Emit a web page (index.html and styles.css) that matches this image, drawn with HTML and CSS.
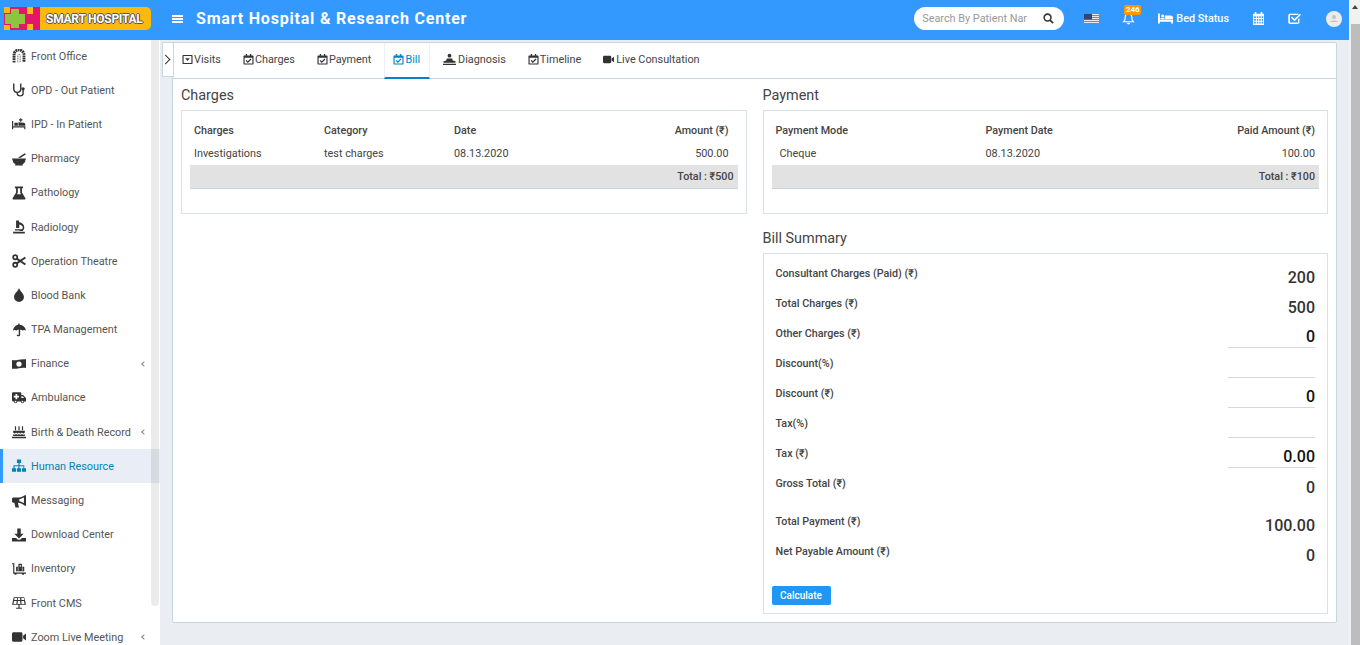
FILE: index.html
```html
<!DOCTYPE html>
<html lang="en">
<head>
    <meta charset="UTF-8">
    <title>Smart Hospital &amp; Research Center</title>
    <link rel="stylesheet" href="styles.css">
</head>
<body>
    <svg class="sprite" xmlns="http://www.w3.org/2000/svg">
        <symbol id="i-office" viewBox="0 0 24 24"><path d="M3.500 23V10a8.500 8.500 0 0 1 17 0v13" fill="none" stroke="currentColor" stroke-width="5" stroke-dasharray="3 1"/><path d="M10 23V11a2 2 0 0 1 4 0v12" fill="none" stroke="currentColor" stroke-width="1.200" stroke-dasharray="2 1"/></symbol>
        <symbol id="i-stetho" viewBox="0 0 24 24"><path d="M4 2H3v8c0 4 3 6 6 6s6-2 6-6V2h-1" fill="none" stroke="currentColor" stroke-width="2.400"/><path d="M9 16v2c0 2 2 4 5 4s5-2 5-4v-6" fill="none" stroke="currentColor" stroke-width="2.400"/><circle cx="19" cy="10" r="2.800"/></symbol>
        <symbol id="i-bed-plus" viewBox="0 0 24 24"><path d="M0 7h2v9h21v5h-2v-3H2v3H0zM4 10h6v5H4zM11 9l9 1c2 0 3 2 3 5H11zM14 2h2v2h2v2h-2v2h-2V6h-2V4h2z"/></symbol>
        <symbol id="i-mortar" viewBox="0 0 24 24"><path d="M0 11h24v2h-1c0 4-2 7-5 8l1 2H5l1-2c-3-1-5-4-5-8H0zM10 10 22 2l2 2-9 6z"/></symbol>
        <symbol id="i-flask" viewBox="0 0 24 24"><path fill-rule="evenodd" d="M5 1h14v3h-2v7l6 10c.6 1 0 2-1 2H2c-1 0-1.600-1-1-2l6-10V4H5zM10 4v7.500L8.500 14h7L14 11.500V4z"/></symbol>
        <symbol id="i-microscope" viewBox="0 0 24 24"><path d="M7 1h5v3h1.500c4 1 7.500 4 7.500 8.500 0 3-1 5-3 6.500h-5v-3h3c1.500 0 2.500-1.500 2.500-3.500 0-2-2-4-6-5v6H7zM2 20h20v3H2zM5 16h8v2H5z"/></symbol>
        <symbol id="i-scissors" viewBox="0 0 24 24"><circle cx="5.500" cy="5.500" r="3.500" fill="none" stroke="currentColor" stroke-width="3"/><circle cx="5.500" cy="18.500" r="3.500" fill="none" stroke="currentColor" stroke-width="3"/><path d="M8 8l15 10M8 16 23 6" stroke="currentColor" stroke-width="3.400"/></symbol>
        <symbol id="i-tint" viewBox="0 0 24 24"><path d="M12 0c1 5 8.500 9 8.500 15.500a8.500 8.500 0 0 1-17 0C3.500 9 11 5 12 0z"/></symbol>
        <symbol id="i-umbrella" viewBox="0 0 24 24"><path d="M11 1h2v2c6 .4 10 4 11 10-2-1.500-4-1.500-6 0-1-1-2-1.500-4-1.500V20c0 3.500-6 3.500-6 0h2.500c0 1 1 1 1 0v-8.500c-2 0-3 .5-4 1.500-2-1.500-4-1.500-6 0 1-6 5-9.600 9-10z"/></symbol>
        <symbol id="i-money" viewBox="0 0 24 24"><path fill-rule="evenodd" d="M0 5c7 2.500 13-2.500 24-1v15c-8-2.500-14 2.500-24 1zM12 7.500a4.500 4.500 0 1 0 0 9 4.500 4.500 0 0 0 0-9z"/></symbol>
        <symbol id="i-ambulance" viewBox="0 0 24 24"><path fill-rule="evenodd" d="M2 2h12c1 0 2 1 2 2v3h3l5 5v6h-3a3 3 0 0 1-6 0H9a3 3 0 0 1-6 0H2c-1 0-2-1-2-2V4c0-1 1-2 2-2zm4 3v3H3v3h3v3h3v-3h3V8H9V5zm10 4v3h5l-3-3zM6 16.500a1.500 1.500 0 1 0 0 3 1.500 1.500 0 0 0 0-3zm12 0a1.500 1.500 0 1 0 0 3 1.500 1.500 0 0 0 0-3z"/></symbol>
        <symbol id="i-cake" viewBox="0 0 24 24"><path d="M5 2h2v7H5zM11 2h2v7h-2zM17 2h2v7h-2zM2 10h20v3c-2 2-3 2-5 0-2 2-3 2-5 0-2 2-3 2-5 0-2 2-3 2-5 0zM2 16c2 1 3 1 5-.5 2 1.500 3 1.500 5 0 2 1.500 3 1.500 5 0 2 1.500 3 1.500 5 .5v3H2zM0 20h24v2.500H0z"/></symbol>
        <symbol id="i-sitemap" viewBox="0 0 24 24"><path d="M8.500 1h7v6h-2.500v3.500h8V16H24v6h-7v-6h2.500v-3.500h-6.500V16h2.500v6h-7v-6H11v-3.500H4.500V16H7v6H0v-6h2.500v-5.500h8.500V7H8.500z"/></symbol>
        <symbol id="i-bullhorn" viewBox="0 0 24 24"><path d="M22 2h2v18h-2c-4-3-8-5-12-5l2 8H6l-2-8H3c-2 0-3-1-3-3V9c0-2 1-3 3-3h7c4 0 8-1 12-4zM20.500 6c-3 1.500-5 2.500-8 3v3.500c3 .5 5 1.500 8 3z" fill-rule="evenodd"/></symbol>
        <symbol id="i-download" viewBox="0 0 24 24"><path d="M9 1h6v9h5l-8 8-8-8h5zM0 17h7l3 3h4l3-3h7v6H0z"/></symbol>
        <symbol id="i-dolly" viewBox="0 0 24 24"><path d="M0 2h4v16h20v2h-3a2 2 0 0 1-4 0H8a2 2 0 0 1-4 0H2V4H0zM8 8h12c1 0 1 .5 1 1v7H7V9c0-.5 0-1 1-1zm3-5h6v5h-2V5h-2v3h-2zM10 9v6h1V9zm7 0v6h1V9z" fill-rule="evenodd"/></symbol>
        <symbol id="i-solar" viewBox="0 0 24 24"><path d="M3 2h18l3 13H0zm1.500 1.500-.7 3.500h4.700l.4-3.500zm5.800 0-.3 3.500h4l-.3-3.500zm5.600 0 .4 3.500h4.700l-.7-3.500zM3.500 8.500l-1 5h5l.5-5zm6.500 0-.4 5h4.800l-.4-5zm6 0 .5 5h5l-1-5zM11 15h2v5h4v2H7v-2h4z" fill-rule="evenodd"/></symbol>
        <symbol id="i-video" viewBox="0 0 24 24"><path d="M3 4h12c2 0 3 1 3 3v10c0 2-1 3-3 3H3c-2 0-3-1-3-3V7c0-2 1-3 3-3zM19 10l5-4v12l-5-4z"/></symbol>
        <symbol id="i-cal-check" viewBox="0 0 24 24"><path fill-rule="evenodd" d="M6 0h3v3h6V0h3v3h3c1 0 2 1 2 2v16c0 1-1 2-2 2H3c-1 0-2-1-2-2V5c0-1 1-2 2-2h3zM3.500 8v12.500h17V8zM16.500 10l1.800 1.800-7.800 7.700-4.800-4.800L7.500 13l3 3z"/></symbol>
        <symbol id="i-caret-box" viewBox="0 0 24 24"><path fill-rule="evenodd" d="M3 2h18c1 0 2 1 2 2v16c0 1-1 2-2 2H3c-1 0-2-1-2-2V4c0-1 1-2 2-2zm.5 2.500v15h17v-15zM7 9h10l-5 6z"/></symbol>
        <symbol id="i-person-bed" viewBox="0 0 24 24"><circle cx="12" cy="5" r="3.500"/><path d="M7 10h10l1 4 5 1v3H1v-3l5-1zM0 20h24v2H0z"/></symbol>
        <symbol id="i-bed" viewBox="0 0 24 24"><path d="M0 4h3v10h21v6h-3v-3H3v3H0zM5 8a2.500 2.500 0 1 1 5 0 2.500 2.500 0 0 1-5 0zM11 7h9c2 0 4 1 4 4v2H11zM4 11h6v2H4z"/></symbol>
        <symbol id="i-calendar" viewBox="0 0 24 24"><path fill-rule="evenodd" d="M5 0h3v3h8V0h3v3h3v21H2V3h3zM4 8v3h3V8zm5 0v3h2.500V8zm4.500 0v3H16V8zM18 8v3h2.500V8zM4 13v3h3v-3zm5 0v3h2.500v-3zm4.500 0v3H16v-3zm4.500 0v3h2.500v-3zM4 18v3h3v-3zm5 0v3h2.500v-3zm4.500 0v3H16v-3zm4.500 0v3h2.500v-3z"/></symbol>
        <symbol id="i-check-square" viewBox="0 0 24 24"><path d="M4 3h15v2.500H4.500c-.7 0-1 .3-1 1v12c0 .7.300 1 1 1h13c.7 0 1-.3 1-1v-5l2.500-2.500V19c0 2-1.500 3-3.500 3H4c-2 0-3.500-1-3.500-3V6c0-2 1.500-3 3.500-3zM22 3l2 2-12 12-6.500-6.500 2-2L12 13z"/></symbol>
    </svg>

    <div class="page">
        <header class="topbar">
            <div class="brand">
                <svg class="brand-mark" viewBox="0 0 36 23"><path fill="#e5146d" d="M6 0h30v23H6v-5H0V6h6z"/><path fill="#fbb80f" d="M23 0h6v7h-6zM23 17h6v6h-6z"/><path fill="#8cc63f" d="M7 2h8v5h6v10h-6v4H7v-4H1V7h6z"/></svg>
                <span class="brand-name">SMART HOSPITAL</span>
            </div>
            <button class="menu-btn" aria-label="Menu"><span></span><span></span><span></span></button>
            <div class="site-title">Smart Hospital &amp; Research Center</div>
            <div class="top-right">
                <div class="search">
                    <input type="text" placeholder="Search By Patient Name">
                    <svg viewBox="0 0 24 24" class="search-icon"><circle cx="10" cy="10" r="7.500" fill="none" stroke="currentColor" stroke-width="3.400"/><path d="M15.500 15.500 22 22" stroke="currentColor" stroke-width="3.800"/></svg>
                </div>
                <svg class="flag" viewBox="0 0 15 10">
                    <rect width="15" height="10" fill="#ece7ee"/>
                    <path fill="#c8687e" d="M0 1h15v1H0zM0 3h15v1H0zM0 5h15v1H0zM0 7h15v1H0zM0 9h15v1H0z"/>
                    <rect width="8" height="5.500" fill="#3c3f78"/>
                </svg>
                <div class="bell">
                    <svg viewBox="0 0 24 24"><path fill="none" stroke="#fff" stroke-width="2.200" d="M12 3c-4 0-6 3-6 7 0 4-1 6-3 8h18c-2-2-3-4-3-8 0-4-2-7-6-7z"/><path fill="#fff" d="M9 20h6c0 2-1.500 3-3 3s-3-1-3-3z"/></svg>
                    <span class="badge">246</span>
                </div>
                <div class="bed-status"><svg viewBox="0 0 24 24"><use href="#i-bed"/></svg>Bed Status</div>
                <svg class="top-icon cal" viewBox="0 0 24 24"><use href="#i-calendar"/></svg>
                <svg class="top-icon chk" viewBox="0 0 24 24"><use href="#i-check-square"/></svg>
                <svg class="avatar" viewBox="0 0 16 16"><circle cx="8" cy="8" r="8" fill="#ececec"/><circle cx="8" cy="6" r="2" fill="#c4c4c4"/><path fill="#c4c4c4" d="M4 11c1-2 7-2 8 0z"/></svg>
            </div>
        </header>

        <div class="main">
            <aside class="sidebar">
                <ul class="side-menu">
                    <li><svg><use href="#i-office"/></svg>Front Office</li>
                    <li><svg><use href="#i-stetho"/></svg>OPD - Out Patient</li>
                    <li><svg><use href="#i-bed-plus"/></svg>IPD - In Patient</li>
                    <li><svg><use href="#i-mortar"/></svg>Pharmacy</li>
                    <li><svg><use href="#i-flask"/></svg>Pathology</li>
                    <li><svg><use href="#i-microscope"/></svg>Radiology</li>
                    <li><svg><use href="#i-scissors"/></svg>Operation Theatre</li>
                    <li><svg><use href="#i-tint"/></svg>Blood Bank</li>
                    <li><svg><use href="#i-umbrella"/></svg>TPA Management</li>
                    <li><svg><use href="#i-money"/></svg>Finance<i class="chev"></i></li>
                    <li><svg><use href="#i-ambulance"/></svg>Ambulance</li>
                    <li><svg><use href="#i-cake"/></svg>Birth &amp; Death Record<i class="chev"></i></li>
                    <li class="active"><svg><use href="#i-sitemap"/></svg>Human Resource</li>
                    <li><svg><use href="#i-bullhorn"/></svg>Messaging</li>
                    <li><svg><use href="#i-download"/></svg>Download Center</li>
                    <li><svg><use href="#i-dolly"/></svg>Inventory</li>
                    <li><svg><use href="#i-solar"/></svg>Front CMS</li>
                    <li><svg><use href="#i-video"/></svg>Zoom Live Meeting<i class="chev"></i></li>
                </ul>
                <div class="side-scroll"></div>
            </aside>

            <section class="content">
                <div class="toggle-tab"><i></i></div>
                <div class="box">
                    <nav class="tabs">
                        <a><svg><use href="#i-caret-box"/></svg>Visits</a>
                        <a><svg><use href="#i-cal-check"/></svg>Charges</a>
                        <a><svg><use href="#i-cal-check"/></svg>Payment</a>
                        <a class="active"><svg><use href="#i-cal-check"/></svg>Bill</a>
                        <a><svg class="wide"><use href="#i-person-bed"/></svg>Diagnosis</a>
                        <a><svg><use href="#i-cal-check"/></svg>Timeline</a>
                        <a><svg class="cam"><use href="#i-video"/></svg>Live Consultation</a>
                    </nav>

                    <div class="columns">
                        <div class="col">
                            <h4>Charges</h4>
                            <div class="panel panel-table">
                                <table class="data">
                                    <tr><th class="w-charges">Charges</th><th class="w-cat">Category</th><th>Date</th><th class="right">Amount (₹)</th></tr>
                                    <tr><td>Investigations</td><td>test charges</td><td>08.13.2020</td><td class="right">500.00</td></tr>
                                    <tr class="total"><td colspan="4">Total : ₹500</td></tr>
                                </table>
                            </div>
                        </div>

                        <div class="col">
                            <h4>Payment</h4>
                            <div class="panel panel-table">
                                <table class="data pay">
                                    <tr><th class="w-mode">Payment Mode</th><th class="w-date">Payment Date</th><th class="right">Paid Amount (₹)</th></tr>
                                    <tr><td class="indent">Cheque</td><td>08.13.2020</td><td class="right">100.00</td></tr>
                                    <tr class="total"><td colspan="3">Total : ₹100</td></tr>
                                </table>
                            </div>

                            <h4 class="second">Bill Summary</h4>
                            <div class="panel summary">
                                <div class="row"><label>Consultant Charges (Paid) (₹)</label><span class="val">200</span></div>
                                <div class="row"><label>Total Charges (₹)</label><span class="val">500</span></div>
                                <div class="row"><label>Other Charges (₹)</label><span class="val field">0</span></div>
                                <div class="row"><label>Discount(%)</label><span class="val field"></span></div>
                                <div class="row"><label>Discount (₹)</label><span class="val field">0</span></div>
                                <div class="row"><label>Tax(%)</label><span class="val field"></span></div>
                                <div class="row"><label>Tax (₹)</label><span class="val field">0.00</span></div>
                                <div class="row"><label>Gross Total (₹)</label><span class="val">0</span></div>
                                <div class="row after-gap"><label>Total Payment (₹)</label><span class="val">100.00</span></div>
                                <div class="row"><label>Net Payable Amount (₹)</label><span class="val">0</span></div>
                                <button class="calc">Calculate</button>
                            </div>
                        </div>
                    </div>
                </div>
            </section>
        </div>
    </div>

    <div class="page-scroll"><i></i><b></b></div>
</body>
</html>
```

FILE: styles.css
```css
* {
    box-sizing: border-box;
}

html, body {
    height: 100%;
}

body {
    margin: 0;
    display: flex;
    height: 645px;
    overflow: hidden;
    font-family: Roboto, "Liberation Sans", sans-serif;
    font-size: 10.85px;
    color: #444;
    background-color: #eaeef3;
}

.sprite {
    display: none;
}

.page {
    flex: 1;
    min-width: 0;
    display: flex;
    flex-direction: column;
}

/* top bar */
.topbar {
    height: 40px;
    flex: none;
    display: flex;
    align-items: center;
    padding-bottom: 3px;
    background-color: #3399ff;
    color: #fff;
}

.brand {
    width: 147px;
    height: 23px;
    margin-left: 4px;
    display: flex;
    align-items: center;
    background-color: #fbb80f;
    border-radius: 0 5px 5px 0;
}

.brand-mark {
    width: 36px;
    height: 23px;
    flex: none;
}

.brand-name {
    margin-left: 6px;
    font-size: 12px;
    font-weight: 700;
    letter-spacing: -0.25px;
    white-space: nowrap;
    color: #fff;
    text-shadow: -1px 0 #555, 1px 0 #555, 0 -1px #555, 0 1px #555;
}

.menu-btn {
    width: 11px;
    height: 8px;
    margin-left: 21px;
    padding: 0;
    border: none;
    background: none;
    display: flex;
    flex-direction: column;
    justify-content: space-between;
}

.menu-btn span {
    display: block;
    height: 2px;
    background-color: #fff;
}

.site-title {
    margin-left: 13px;
    font-size: 16px;
    font-weight: 700;
    letter-spacing: 0.8px;
    white-space: nowrap;
}

.top-right {
    margin-left: auto;
    display: flex;
    align-items: center;
    padding-right: 7px;
}

.search {
    width: 150px;
    height: 23px;
    display: flex;
    align-items: center;
    background-color: #fff;
    border-radius: 12px;
    padding: 0 10px 0 8px;
}

.search input {
    width: 105px;
    border: none;
    outline: none;
    padding: 0;
    font-family: inherit;
    font-size: 10.85px;
    color: #555;
}

.search input::placeholder {
    color: #999;
}

.search-icon {
    width: 11px;
    height: 11px;
    margin-left: auto;
    color: #333;
}

.flag {
    width: 15px;
    height: 10px;
    margin-left: 20px;
}

.bell {
    position: relative;
    width: 13px;
    height: 13px;
    margin-left: 23px;
}

.bell svg {
    display: block;
    width: 13px;
    height: 13px;
}

.badge {
    position: absolute;
    top: -7px;
    left: 2px;
    width: 17px;
    height: 10px;
    border-radius: 2px;
    background-color: #ff9800;
    font-size: 8px;
    font-weight: 700;
    line-height: 10px;
    text-align: center;
}

.bed-status {
    margin-left: 23px;
    display: flex;
    align-items: center;
    font-weight: 500;
    white-space: nowrap;
}

.bed-status svg {
    width: 15px;
    height: 15px;
    margin-right: 3px;
    fill: #fff;
}

.top-icon {
    width: 13px;
    height: 13px;
    fill: #fff;
}

.cal {
    margin-left: 23px;
}

.chk {
    margin-left: 23px;
}

.avatar {
    width: 16px;
    height: 16px;
    margin-left: 25px;
}

/* sidebar */
.main {
    flex: 1;
    min-height: 0;
    display: flex;
}

.sidebar {
    position: relative;
    width: 160px;
    flex: none;
    background-color: #fff;
    overflow: hidden;
}

.side-menu {
    list-style: none;
    margin: -1px 0 0;
    padding: 0;
}

.side-menu li {
    height: 34.2px;
    display: flex;
    align-items: center;
    padding-left: 12px;
    color: #555;
    white-space: nowrap;
}

.side-menu li svg {
    width: 14px;
    height: 14px;
    margin-right: 5px;
    flex: none;
    fill: #333;
    color: #333;
}

.side-menu li.active {
    background-color: #e9edf5;
    border-left: 3px solid #3399ff;
    padding-left: 9px;
    color: #0084b4;
}

.side-menu li.active svg {
    fill: #0084b4;
}

.chev {
    position: absolute;
    left: 142px;
    width: 4px;
    height: 4px;
    border-left: 1px solid #888;
    border-bottom: 1px solid #888;
    transform: rotate(45deg);
}

.side-scroll {
    position: absolute;
    top: 0;
    left: 151px;
    width: 8px;
    height: 566px;
    border-radius: 0 0 4px 4px;
    background-color: rgba(0, 0, 0, 0.08);
}

/* content */
.content {
    position: relative;
    flex: 1;
    min-width: 0;
    padding: 2px 12px 0 12px;
}

.toggle-tab {
    position: absolute;
    top: 2px;
    left: 2px;
    width: 12px;
    height: 35px;
    background-color: #fff;
    border: 1px solid #c5d6e2;
    z-index: 1;
}

.toggle-tab i {
    position: absolute;
    top: 13px;
    left: -1px;
    width: 7px;
    height: 7px;
    border-top: 1.5px solid #333;
    border-right: 1.5px solid #333;
    transform: rotate(45deg);
}

.box {
    height: 581px;
    background-color: #fff;
    border: 1px solid #c5d6e2;
    border-radius: 2px;
}

.tabs {
    height: 36px;
    display: flex;
    border-bottom: 1px solid #c5d6e2;
}

.tabs a {
    display: flex;
    align-items: center;
    height: 36px;
    padding: 0 9px 4px;
    margin-right: 4px;
    color: #444;
    white-space: nowrap;
}

.tabs a svg {
    width: 11px;
    height: 11px;
    margin-right: 1px;
    fill: #333;
}

.tabs a svg.wide {
    width: 13px;
    height: 13px;
    margin-right: 2px;
}

.tabs a svg.cam {
    margin-right: 2px;
}

.tabs a.active {
    color: #0084c7;
    border-bottom: 2px solid #0084c7;
    border-left: 1px solid #edf1f5;
    border-right: 1px solid #edf1f5;
    padding: 0 9px 2px 8px;
}

.tabs a.active svg {
    fill: #0084c7;
}

.columns {
    display: grid;
    grid-template-columns: 1fr 1fr;
    column-gap: 16px;
    padding: 0 8px;
    align-items: start;
}

h4 {
    margin: 0;
    height: 31px;
    padding-top: 8px;
    font-size: 14.4px;
    line-height: 18px;
    font-weight: 400;
    color: #444;
}

h4.second {
    height: 39px;
    padding-top: 16px;
}

.panel {
    background-color: #fff;
    border: 1px solid #dbe0e4;
}

.panel-table {
    height: 104px;
    padding: 8px;
}

.data {
    width: 100%;
    border-collapse: collapse;
    table-layout: fixed;
}

.data th, .data td {
    height: 23px;
    padding: 0 4px;
    text-align: left;
    font-size: 10.85px;
    color: #444;
}

.data th {
    font-weight: 500;
    font-size: 10.75px;
}

.data .right {
    text-align: right;
    padding-right: 9px;
}

.data .w-charges, .data .w-cat {
    width: 130px;
}

.pay .w-mode {
    width: 210px;
}

.pay .w-date {
    width: 210px;
}

.pay .right {
    padding-right: 4px;
}

.data .indent {
    padding-left: 8px;
}

.data .total td {
    height: 23px;
    background-color: #e2e2e2;
    border-bottom: 1px solid #c5d6e2;
    text-align: right;
    font-weight: 500;
    font-size: 10.75px;
}

.pay .total td {
    padding-right: 4px;
}

.summary {
    height: 361px;
    padding: 9px 12px 0 8px;
}

.row {
    height: 30px;
    display: flex;
    justify-content: space-between;
    align-items: flex-start;
    padding-left: 4px;
}

.row.after-gap {
    margin-top: 8px;
}

.row label {
    line-height: 22px;
    font-weight: 500;
    font-size: 10.75px;
}

.val {
    width: 87px;
    height: 25px;
    line-height: 29px;
    text-align: right;
    font-size: 16px;
    font-weight: 500;
    color: #333;
}

.field {
    border-bottom: 1px solid #d6d9dc;
    color: #111;
    line-height: 27px;
}

.calc {
    display: block;
    margin-top: 15px;
    width: 59px;
    height: 19px;
    padding: 0;
    border: none;
    border-radius: 2px;
    background-color: #2196f3;
    color: #fff;
    font-family: inherit;
    font-size: 10px;
    font-weight: 500;
}

/* browser scrollbar */
.page-scroll {
    position: relative;
    width: 11px;
    flex: none;
    background-color: #f1f1f1;
}

.page-scroll i {
    position: absolute;
    top: 5px;
    left: 3px;
    border-left: 3px solid transparent;
    border-right: 3px solid transparent;
    border-bottom: 4px solid #444;
}

.page-scroll b {
    position: absolute;
    top: 24px;
    left: 2px;
    right: 0;
    bottom: 0;
    background-color: #bdbdbd;
}
```
